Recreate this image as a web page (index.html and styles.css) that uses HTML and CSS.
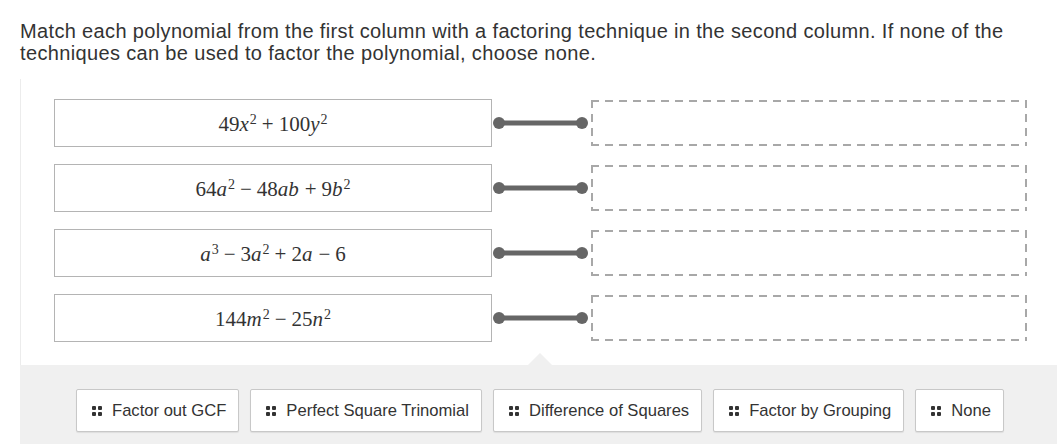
FILE: index.html
```html
<!DOCTYPE html>
<html>
<head>
<meta charset="utf-8">
<link rel="stylesheet" href="styles.css">
</head>
<body>
<p class="prompt">Match each polynomial from the first column with a factoring technique in the second column. If none of the techniques can be used to factor the polynomial, choose none.</p>
<div class="widget">
  <div class="rows">
    <div class="row">
      <div class="poly"><span class="math">49<i>x</i><sup>2</sup><span class="op">+</span>100<i>y</i><sup>2</sup></span></div>
      <svg class="link" width="99" height="14" viewBox="0 0 99 14"><line x1="7" y1="7" x2="90" y2="7" stroke="#666" stroke-width="5"/><circle cx="7" cy="7" r="6" fill="#666"/><circle cx="90" cy="7" r="6" fill="#666"/></svg>
      <div class="slot"></div>
    </div>
    <div class="row">
      <div class="poly"><span class="math">64<i>a</i><sup>2</sup><span class="op">−</span>48<i>ab</i><span class="op">+</span>9<i>b</i><sup>2</sup></span></div>
      <svg class="link" width="99" height="14" viewBox="0 0 99 14"><line x1="7" y1="7" x2="90" y2="7" stroke="#666" stroke-width="5"/><circle cx="7" cy="7" r="6" fill="#666"/><circle cx="90" cy="7" r="6" fill="#666"/></svg>
      <div class="slot"></div>
    </div>
    <div class="row">
      <div class="poly"><span class="math"><i>a</i><sup>3</sup><span class="op">−</span>3<i>a</i><sup>2</sup><span class="op">+</span>2<i>a</i><span class="op">−</span>6</span></div>
      <svg class="link" width="99" height="14" viewBox="0 0 99 14"><line x1="7" y1="7" x2="90" y2="7" stroke="#666" stroke-width="5"/><circle cx="7" cy="7" r="6" fill="#666"/><circle cx="90" cy="7" r="6" fill="#666"/></svg>
      <div class="slot"></div>
    </div>
    <div class="row">
      <div class="poly"><span class="math">144<i>m</i><sup>2</sup><span class="op">−</span>25<i>n</i><sup>2</sup></span></div>
      <svg class="link" width="99" height="14" viewBox="0 0 99 14"><line x1="7" y1="7" x2="90" y2="7" stroke="#666" stroke-width="5"/><circle cx="7" cy="7" r="6" fill="#666"/><circle cx="90" cy="7" r="6" fill="#666"/></svg>
      <div class="slot"></div>
    </div>
  </div>
  <div class="tray">
    <span class="notch"></span>
    <div class="chip"><span class="grip"><b></b><b></b><b></b><b></b></span>Factor out GCF</div>
    <div class="chip"><span class="grip"><b></b><b></b><b></b><b></b></span>Perfect Square Trinomial</div>
    <div class="chip"><span class="grip"><b></b><b></b><b></b><b></b></span>Difference of Squares</div>
    <div class="chip"><span class="grip"><b></b><b></b><b></b><b></b></span>Factor by Grouping</div>
    <div class="chip"><span class="grip"><b></b><b></b><b></b><b></b></span>None</div>
  </div>
</div>
</body>
</html>
```

FILE: styles.css
```css
html, body {
  margin: 0;
  padding: 0;
  background: #fff;
}
body {
  font-family: "Liberation Sans", Arial, sans-serif;
  color: #333;
}
.prompt {
  margin: 0;
  padding: 20px 20px 0 20px;
  font-size: 20px;
  line-height: 22px;
  letter-spacing: 0.35px;
}
.widget {
  margin: 15px 0 0 20px;
}
.rows {
  border-left: 1px solid #ececec;
  padding: 20px 0 23px 33px;
  display: flex;
  flex-direction: column;
  gap: 17px;
}
.row {
  display: flex;
  align-items: center;
}
.poly {
  width: 436px;
  height: 46px;
  border: 1px solid #b4b4b4;
  display: flex;
  align-items: center;
  justify-content: center;
  box-sizing: content-box;
}
.math {
  font-family: "Liberation Serif", "Times New Roman", serif;
  font-size: 21px;
  color: #333;
  white-space: nowrap;
  padding-top: 3px;
}
.math i {
  font-style: italic;
  margin-right: 1px;
}
.math .op {
  margin: 0 5px;
}
.math sup {
  font-size: 14px;
  vertical-align: 0;
  position: relative;
  top: -7px;
}
.link {
  display: block;
  flex: none;
}
.slot {
  width: 436px;
  height: 46px;
  background:
    repeating-linear-gradient(90deg, #a8a8a8 0 8px, transparent 8px 14px) top left / 100% 2px no-repeat,
    repeating-linear-gradient(90deg, #a8a8a8 0 8px, transparent 8px 14px) bottom left / 100% 2px no-repeat,
    repeating-linear-gradient(180deg, #a8a8a8 0 8px, transparent 8px 14px) top left / 2px 100% no-repeat,
    repeating-linear-gradient(180deg, #a8a8a8 0 8px, transparent 8px 14px) top right / 2px 100% no-repeat;
}
.tray {
  position: relative;
  background: #f0f0f0;
  height: 79px;
  box-sizing: border-box;
  padding: 24px 0 0 56px;
  display: flex;
  align-items: flex-start;
  gap: 11px;
}
.notch {
  position: absolute;
  top: -12px;
  left: 508px;
  width: 0;
  height: 0;
  border-left: 12px solid transparent;
  border-right: 12px solid transparent;
  border-bottom: 12px solid #f0f0f0;
}
.chip {
  height: 41px;
  background: #fff;
  border: 1px solid #c8c8c8;
  border-radius: 2px;
  box-shadow: 0 1px 1px rgba(0,0,0,0.08);
  display: flex;
  align-items: center;
  padding: 0 12px 0 15px;
  font-size: 16.6px;
  color: #333;
  white-space: nowrap;
}
.grip {
  display: grid;
  grid-template-columns: 4px 4px;
  grid-template-rows: 4px 4px;
  gap: 2px;
  margin-right: 10px;
}
.grip b {
  display: block;
  width: 4px;
  height: 4px;
  background: #333;
  border-radius: 1px;
}
```
